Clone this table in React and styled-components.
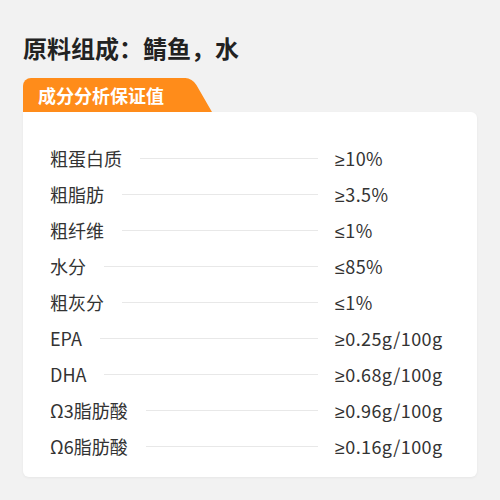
import React from 'react';
import styled, { createGlobalStyle } from 'styled-components';

const GlobalStyle = createGlobalStyle`
  html, body { margin: 0; padding: 0; background: #f2f2f2; }
  body {
    font-family: "Noto Sans CJK SC", "Noto Sans", sans-serif;
    color: #333;
  }
`

const Page = styled.div`
  width: 500px;
  height: 500px;
  padding: 36px 23px 0;
  box-sizing: border-box;
  background: #f2f2f2;
`
const Title = styled.h1`
  margin: 0;
  height: 24px;
  font-size: 24px;
  line-height: 24px;
  font-weight: 700;
  color: #222;
`
const TabRow = styled.div`
  display: flex;
  margin-top: 18px;
`
const Tab = styled.div`
  position: relative;
  display: flex;
  align-items: center;
  height: 34px;
  width: 146px;
  padding-left: 15px;
  background: #ff8c1a;
  border-top-left-radius: 8px;
  color: #fff;
  font-size: 18px;
  font-weight: 700;

  &::after {
    content: '';
    position: absolute;
    top: 0; right: -28px;
    width: 50px; height: 100%;
    background: #ff8c1a;
    border-top-right-radius: 7px;
    transform: skewX(30deg);
    transform-origin: bottom left;
  }
  > span {
    position: relative;
    z-index: 1;
  }
`
const Card = styled.div`
  padding: 28px 0 13px 27px;
  background: #fff;
  border-radius: 0 6px 6px 6px;
  box-shadow: 0 1px 3px rgba(0, 0, 0, 0.05);
`
const Row = styled.div`
  display: flex;
  align-items: center;
  height: 36px;
  font-size: 18px;
`
const Label = styled.div`
  white-space: nowrap;
  color: #333;
`
const Leader = styled.div`
  flex: 1;
  margin: 0 17px 0 18px;
  border-top: 1px solid #e8e8e8;
`
const Value = styled.div`
  width: 142px;
  white-space: nowrap;
  letter-spacing: 0.4px;
  color: #333;
`
const Sign = styled.span`
  font-family: "Liberation Sans", "DejaVu Sans", sans-serif;
  font-size: 18px;
`

const rows = [
  ['粗蛋白质', '≥', '10%'],
  ['粗脂肪', '≥', '3.5%'],
  ['粗纤维', '≤', '1%'],
  ['水分', '≤', '85%'],
  ['粗灰分', '≤', '1%'],
  ['EPA', '≥', '0.25g/100g'],
  ['DHA', '≥', '0.68g/100g'],
  ['Ω3脂肪酸', '≥', '0.96g/100g'],
  ['Ω6脂肪酸', '≥', '0.16g/100g'],
]

export default function App() {
  return (
    <Page>
      <GlobalStyle />
      <Title>原料组成：鲭鱼，水</Title>
      <TabRow>
        <Tab><span>成分分析保证值</span></Tab>
      </TabRow>
      <Card>
        {rows.map(([label, sign, value]) => (
          <Row key={label}>
            <Label>{label}</Label>
            <Leader />
            <Value><Sign>{sign}</Sign>{value}</Value>
          </Row>
        ))}
      </Card>
    </Page>
  );
}
